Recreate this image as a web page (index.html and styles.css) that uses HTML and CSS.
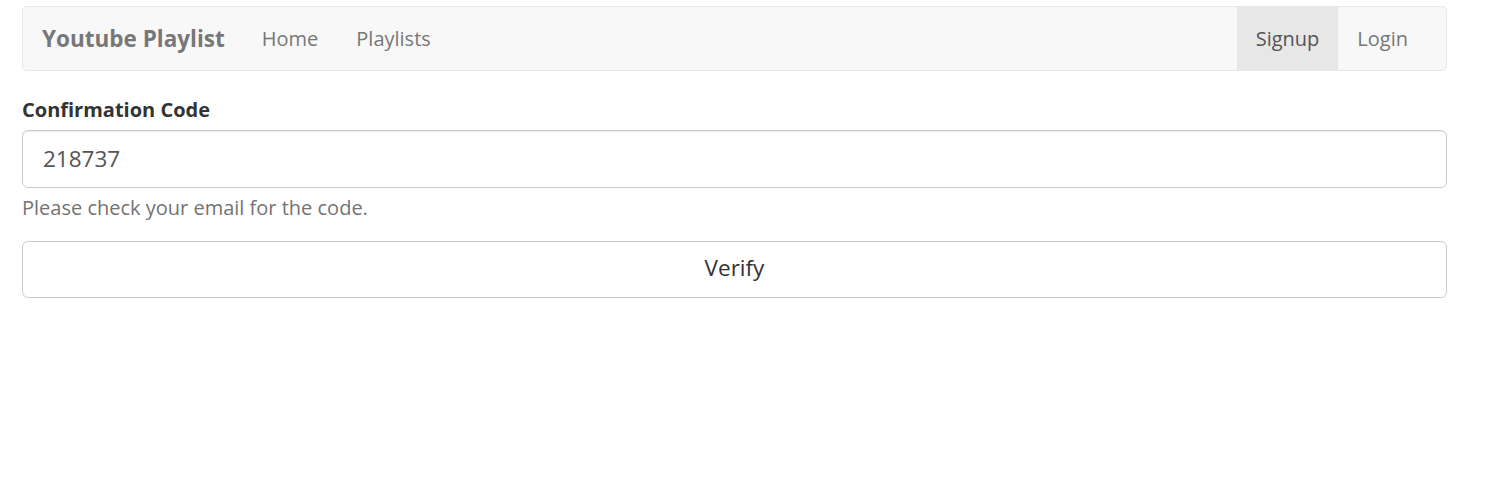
FILE: index.html
```html
<!DOCTYPE html>
<html>
<head>
<meta charset="utf-8">
<link rel="stylesheet" href="styles.css">
</head>
<body>
<div class="page">
  <nav class="navbar">
    <a class="brand">Youtube Playlist</a>
    <ul class="nav">
      <li><a>Home</a></li>
      <li><a>Playlists</a></li>
    </ul>
    <ul class="nav nav-right">
      <li class="active"><a>Signup</a></li>
      <li><a>Login</a></li>
    </ul>
  </nav>
  <form class="form">
    <div class="form-group">
      <label class="label">Confirmation Code</label>
      <input class="input" type="text" value="218737">
      <p class="help">Please check your email for the code.</p>
    </div>
    <button type="button" class="btn">Verify</button>
  </form>
</div>
</body>
</html>
```
FILE: styles.css
```css
* { box-sizing: border-box; }
html, body { margin: 0; padding: 0; background: #fff; }
body {
  font-family: "Open Sans", "Liberation Sans", sans-serif;
  font-size: 20px;
  line-height: 1.42857;
  color: #333;
}
.page {
  width: 1425px;
  margin-left: 22px;
  padding-top: 6px;
}
.navbar {
  display: flex;
  align-items: stretch;
  height: 65px;
  background: #f8f8f8;
  border: 1px solid #e7e7e7;
  border-radius: 5px;
  padding: 0 19px;
  margin-bottom: 26px;
}
.brand {
  display: flex;
  align-items: center;
  font-size: 22.5px;
  font-weight: 700;
  color: #777;
  margin-right: 18px;
  padding-top: 2px;
}
.nav {
  display: flex;
  list-style: none;
  margin: 0;
  padding: 0;
}
.nav li a {
  display: flex;
  align-items: center;
  height: 100%;
  padding: 2px 19px 0;
  color: #777;
  font-size: 20px;
}
.nav li.active a {
  background: #e7e7e7;
  color: #555;
}
.nav-right { margin-left: auto; }
.label {
  display: block;
  font-weight: 700;
  font-size: 20px;
  line-height: 26px;
  margin-bottom: 7px;
  color: #333;
}
.input {
  display: block;
  width: 100%;
  height: 58px;
  padding: 0 20px 2px;
  font-family: inherit;
  font-size: 22.5px;
  color: #555;
  border: 1px solid #ccc;
  border-radius: 6px;
  box-shadow: inset 0 1px 1px rgba(0,0,0,0.075);
  background: #fff;
}
.help {
  margin: 7px 0 0;
  line-height: 26px;
  color: #737373;
  font-size: 20px;
}
.form-group { margin-bottom: 20px; }
.btn {
  display: block;
  width: 100%;
  height: 57px;
  font-family: inherit;
  font-size: 22.5px;
  color: #333;
  background: #fff;
  border: 1px solid #ccc;
  border-radius: 6px;
  padding: 0 0 4px;
}
```
